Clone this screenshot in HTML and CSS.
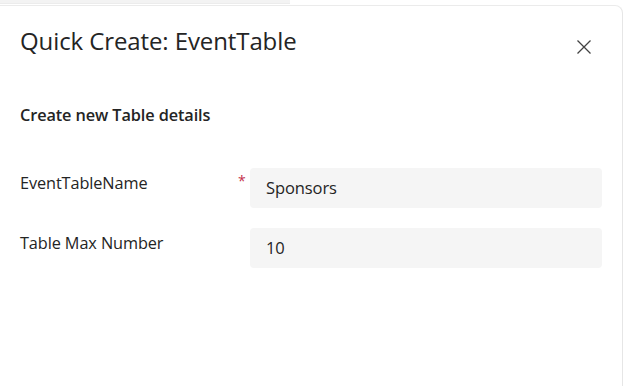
FILE: index.html
```html
<!DOCTYPE html>
<html>
<head>
    <title>Quick Create: EventTable</title>
    <link rel="stylesheet" href="styles.css">
</head>
<body>
    <div class="backdrop-edge"></div>
    <div class="panel">
        <div class="panel-header">
            <h1 class="panel-title">Quick Create: EventTable</h1>
            <button class="close-btn" aria-label="Close">
                <svg width="16" height="16" viewBox="0 0 16 16">
                    <path d="M1.5 1.5 L14.5 14.5 M14.5 1.5 L1.5 14.5" stroke="#424242" stroke-width="1.3" fill="none"/>
                </svg>
            </button>
        </div>

        <h2 class="section-title">Create new Table details</h2>

        <div class="form">
            <div class="field">
                <label class="field-label">EventTableName</label>
                <span class="required">*</span>
                <div class="field-input">Sponsors</div>
            </div>
            <div class="field">
                <label class="field-label">Table Max Number</label>
                <span class="required"></span>
                <div class="field-input">10</div>
            </div>
        </div>
    </div>
</body>
</html>
```

FILE: styles.css
```css
html, body {
    margin: 0;
    height: 100%;
    overflow: hidden;
}
body {
    font-family: "Open Sans", "Noto Sans", sans-serif;
    background: #ffffff;
    color: #242424;
}
.backdrop-edge {
    height: 3px;
    width: 290px;
    border-bottom: 1px solid #ececec;
    background: #f3f3f3;
}
.panel {
    margin-top: 1px;
    margin-right: 4px;
    height: calc(100vh - 5px);
    box-sizing: border-box;
    background: #fff;
    border-top: 1px solid #ebebeb;
    border-right: 1px solid #e6e6e6;
    border-top-right-radius: 8px;
    padding: 0 20px;
}
.panel-header {
    display: flex;
    justify-content: space-between;
    align-items: flex-start;
    padding-top: 20px;
}
.panel-title {
    margin: 0;
    font-size: 24px;
    font-weight: 500;
    letter-spacing: -0.1px;
    line-height: 30px;
}
.close-btn {
    background: none;
    border: none;
    padding: 0;
    margin-top: 13px;
    margin-right: 10px;
    width: 16px;
    height: 16px;
    cursor: pointer;
}
.close-btn svg {
    display: block;
}
.section-title {
    margin: 48px 0 0;
    font-size: 16.3px;
    font-weight: 600;
    letter-spacing: -0.1px;
    line-height: 22px;
}
.form {
    margin-top: 42px;
    display: flex;
    flex-direction: column;
    gap: 20px;
}
.field {
    display: grid;
    grid-template-columns: 1fr 14px 352px;
    align-items: start;
}
.field-label {
    font-size: 16.3px;
    letter-spacing: -0.1px;
    line-height: 30px;
}
.required {
    color: #c4314b;
    font-size: 14px;
    line-height: 26px;
    padding-left: 2px;
}
.field-input {
    height: 40px;
    box-sizing: border-box;
    background: #f5f5f5;
    border-radius: 4px;
    padding: 0 16px;
    font-size: 16.5px;
    letter-spacing: -0.1px;
    line-height: 40px;
}
```
